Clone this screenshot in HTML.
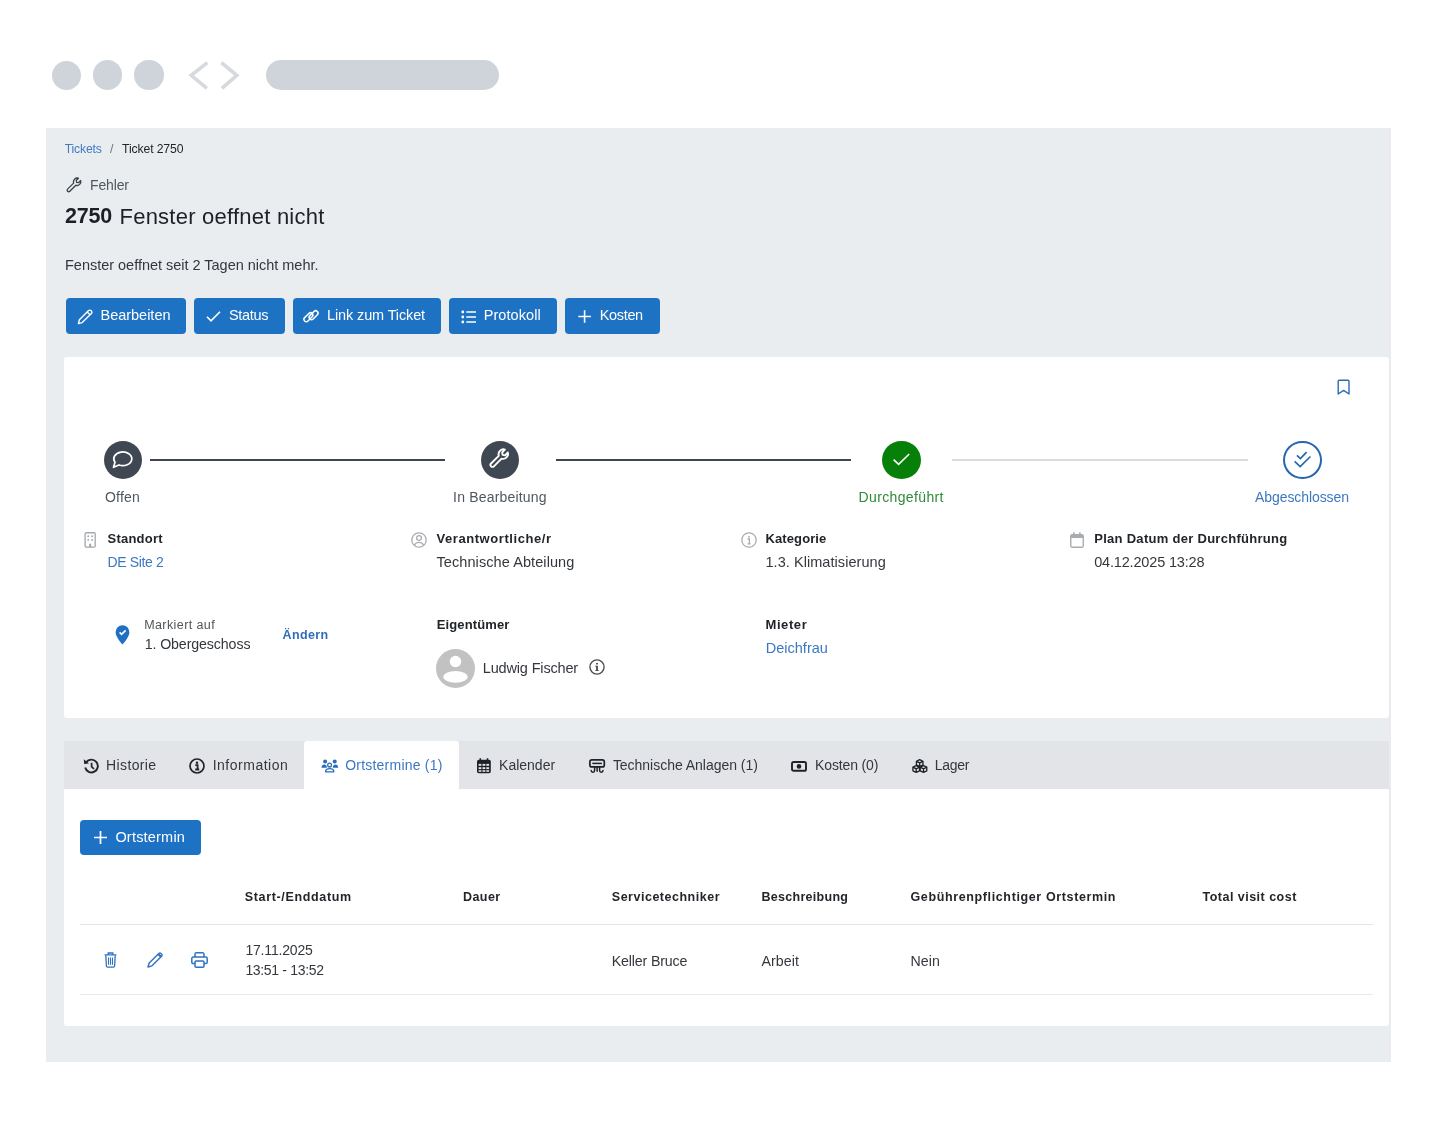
<!DOCTYPE html>
<html><head><meta charset="utf-8">
<style>
html{margin:0;padding:0;background:#fff;}
body{margin:0;padding:0;background:#fff;width:1438px;height:1146px;overflow:hidden;position:relative;font-family:"Liberation Sans",sans-serif;filter:blur(0.4px);}
.a{position:absolute;}
.t{position:absolute;white-space:nowrap;line-height:1;font-family:"Liberation Sans",sans-serif;}
.dot{position:absolute;width:29.3px;height:29.3px;border-radius:50%;background:#cfd4da;top:60.6px;}
.btn{position:absolute;top:298px;height:36px;background:#1e72c4;border-radius:4px;}
.step{position:absolute;top:441px;width:38px;height:38px;border-radius:50%;}
.line{position:absolute;top:459px;height:2px;}
svg{position:absolute;overflow:visible;}
</style></head><body>
<!-- browser chrome -->
<div class="dot" style="left:51.8px;top:61px"></div>
<div class="dot" style="left:92.9px;top:60.4px"></div>
<div class="dot" style="left:134.4px;top:60.3px"></div>
<svg style="left:0;top:0" width="1438" height="120"><path d="M207.4 62.6 L191.2 75.3 L206.9 88.4 M221.4 62.6 L236.8 75.3 L221.9 88.4" fill="none" stroke="#d6d9dd" stroke-width="3.6" stroke-linejoin="miter"/></svg>
<div class="a" style="left:266px;top:60px;width:233px;height:30px;border-radius:15px;background:#cfd4da"></div>
<!-- panel -->
<div class="a" style="left:46px;top:128px;width:1342px;height:934px;background:#eaedf0;border-right:3px solid #eaebee"></div>
<!-- wrench icon (Fehler) -->
<svg style="left:66px;top:177px" width="16" height="16" viewBox="0 0 16 16"><path d="M12.4 1.2a3.9 3.9 0 0 0-4.8 4.9L1.6 12.1a1.5 1.5 0 0 0 2.2 2.2l6-6a3.9 3.9 0 0 0 4.9-4.8l-2.2 2.2-1.9-.3-.3-1.9z" fill="none" stroke="#3b4148" stroke-width="1.3" stroke-linejoin="round"/></svg>
<!-- buttons -->
<div class="btn" style="left:66px;width:120px"></div>
<div class="btn" style="left:194px;width:90.5px"></div>
<div class="btn" style="left:292.5px;width:148.5px"></div>
<div class="btn" style="left:449px;width:108px"></div>
<div class="btn" style="left:565px;width:94.5px"></div>
<!-- button icons -->
<svg style="left:77px;top:308.5px" width="16" height="16" viewBox="0 0 16 16"><path d="M11.6 1.6a1.6 1.6 0 0 1 2.3 0l.5.5a1.6 1.6 0 0 1 0 2.3L5.2 13.6 1.4 14.6l1-3.8z M10.2 3 13 5.8" fill="none" stroke="#fff" stroke-width="1.4" stroke-linejoin="round"/></svg>
<svg style="left:206px;top:310px" width="15" height="13" viewBox="0 0 15 13"><path d="M1 6.8 5 10.8 14 1.8" fill="none" stroke="#fff" stroke-width="1.6"/></svg>
<svg style="left:298px;top:303px" width="28" height="27" viewBox="0 0 28 27"><rect x="-5.3" y="-2.35" width="10.6" height="4.7" rx="2.35" transform="translate(10.4 14.2) rotate(-45)" fill="none" stroke="#fff" stroke-width="1.5"/><rect x="-5.3" y="-2.35" width="10.6" height="4.7" rx="2.35" transform="translate(15.6 12.2) rotate(-45)" fill="none" stroke="#fff" stroke-width="1.5"/></svg>
<svg style="left:460.5px;top:309px" width="16" height="16" viewBox="0 0 16 16"><circle cx="1.8" cy="3" r="1.4" fill="#fff"/><circle cx="1.8" cy="8" r="1.4" fill="#fff"/><circle cx="1.8" cy="13" r="1.4" fill="#fff"/><path d="M5.3 3H15M5.3 8H15M5.3 13H15" stroke="#fff" stroke-width="1.5"/></svg>
<svg style="left:577.5px;top:309.8px" width="14" height="14" viewBox="0 0 14 14"><path d="M6.6 0.3V12.7M0.3 6.5H12.9" stroke="#fff" stroke-width="1.6"/></svg>
<!-- card 1 -->
<div class="a" style="left:64px;top:357px;width:1325px;height:361px;background:#fff;border-radius:3px"></div>
<!-- bookmark -->
<svg style="left:1336.5px;top:378.5px" width="13" height="17" viewBox="0 0 13 17"><path d="M1.2 15V2.3Q1.2 1.2 2.3 1.2H10.9Q12 1.2 12 2.3V15L6.6 11.4Z" fill="none" stroke="#2a6cb5" stroke-width="1.4" stroke-linejoin="round"/></svg>
<!-- step lines -->
<div class="line" style="left:150px;width:295px;background:#3d4650"></div>
<div class="line" style="left:555.5px;width:295px;background:#3d4650"></div>
<div class="line" style="left:952px;width:296px;background:#dadcdf"></div>
<!-- step circles -->
<div class="step" style="left:103.5px;background:#3f4852"></div>
<div class="step" style="left:481px;background:#3f4852"></div>
<div class="step" style="left:882.2px;width:38.7px;height:38.3px;top:440.7px;background:#078009"></div>
<div class="step" style="left:1283px;width:38.7px;height:38.5px;top:440.6px;box-sizing:border-box;border:2px solid #2566b1;background:#fff"></div>
<!-- step icons -->
<svg style="left:112px;top:450px" width="22" height="20" viewBox="0 0 22 20"><path d="M3.0 12.2A9 6.8 0 1 1 7.0 14.96L1.5 17.3Z" fill="none" stroke="#fff" stroke-width="1.7" stroke-linejoin="round"/></svg>
<svg style="left:489.3px;top:448.2px" width="20.5" height="20.5" viewBox="0 0 16 16"><path d="M12.4 1.2a3.9 3.9 0 0 0-4.8 4.9L1.6 12.1a1.5 1.5 0 0 0 2.2 2.2l6-6a3.9 3.9 0 0 0 4.9-4.8l-2.2 2.2-1.9-.3-.3-1.9z" fill="none" stroke="#fff" stroke-width="1.45" stroke-linejoin="round"/></svg>
<svg style="left:893px;top:453px" width="18" height="14" viewBox="0 0 18 14"><path d="M0.6 6.6 5.6 11.4 16.2 1.0" fill="none" stroke="#fff" stroke-width="1.6"/></svg>
<svg style="left:1292px;top:450px" width="20" height="20" viewBox="0 0 20 20"><path d="M4.9 5.3 8.4 8.6 14.6 2.2 M2.6 11.4 8.2 16.6 18.4 6.5" fill="none" stroke="#2566b1" stroke-width="1.7"/></svg>
<!-- info icons row1 -->
<svg style="left:83.5px;top:532px" width="12" height="16" viewBox="0 0 12 16"><rect x="1.1" y="0.75" width="10.1" height="14.3" rx="1.3" fill="none" stroke="#a3a7ab" stroke-width="1.3"/><g fill="#a3a7ab"><circle cx="4.2" cy="4.2" r="0.95"/><circle cx="8.1" cy="4.2" r="0.95"/><circle cx="4.2" cy="7.9" r="0.95"/><circle cx="8.1" cy="7.9" r="0.95"/><path d="M5.1 15V12.3Q6.15 10.9 7.2 12.3V15z"/></g></svg>
<svg style="left:411px;top:532px" width="16" height="16" viewBox="0 0 16 16"><circle cx="8" cy="8" r="7.2" fill="none" stroke="#a9acb0" stroke-width="1.3"/><circle cx="8" cy="6" r="2.4" fill="none" stroke="#a9acb0" stroke-width="1.3"/><path d="M3.5 13.2c.8-1.8 2.5-2.8 4.5-2.8s3.7 1 4.5 2.8" fill="none" stroke="#a9acb0" stroke-width="1.3"/></svg>
<svg style="left:740.5px;top:532px" width="16" height="16" viewBox="0 0 16 16"><circle cx="8" cy="8" r="7.2" fill="none" stroke="#a9acb0" stroke-width="1.3"/><circle cx="8" cy="4.8" r="0.9" fill="#a9acb0"/><path d="M6.6 7H8.4V11.8M6.6 11.8H9.6" fill="none" stroke="#a9acb0" stroke-width="1.3"/></svg>
<svg style="left:1070px;top:532px" width="14" height="16" viewBox="0 0 14 16"><rect x="0.75" y="2.6" width="12.5" height="12.7" rx="1.6" fill="none" stroke="#a9acb0" stroke-width="1.4"/><path d="M0.75 4.2Q0.75 2.6 2.35 2.6H11.65Q13.25 2.6 13.25 4.2V6H0.75z" fill="#a9acb0"/><path d="M3.9 0.3V3M9.9 0.3V3" stroke="#a9acb0" stroke-width="1.5"/></svg>
<!-- pin -->
<svg style="left:114.5px;top:625px" width="15" height="20" viewBox="0 0 15 20"><path d="M7.5 19.5C7.5 19.5 14.4 12.2 14.4 7.2A6.9 6.9 0 0 0 .6 7.2C.6 12.2 7.5 19.5 7.5 19.5z" fill="#1f6fc3"/><path d="M4.6 7.4 6.6 9.4 10.6 5.4" fill="none" stroke="#fff" stroke-width="1.6"/></svg>
<!-- avatar -->
<svg style="left:436px;top:649px" width="39" height="39" viewBox="0 0 39 39"><circle cx="19.5" cy="19.5" r="19.5" fill="#c2c2c2"/><circle cx="19.5" cy="12.5" r="5.7" fill="#fff"/><ellipse cx="19.5" cy="27.8" rx="12.2" ry="5.9" fill="#fff"/></svg>
<svg style="left:588.9px;top:658.8px" width="16" height="16" viewBox="0 0 16 16"><circle cx="8" cy="8" r="7.1" fill="none" stroke="#4a4d51" stroke-width="1.35"/><rect x="7.1" y="3.9" width="1.8" height="1.6" fill="#4a4d51"/><path d="M6.4 6.8H8.9V10.5L10 11.9H6L7.1 10.5V8.1L6.4 7.7z" fill="#4a4d51"/></svg>
<!-- tabs bar -->
<div class="a" style="left:64px;top:741.3px;width:1325px;height:47.7px;background:#e2e4e8"></div>
<div class="a" style="left:304px;top:741.3px;width:154.5px;height:47.7px;background:#fff;border-radius:3px 3px 0 0"></div>
<!-- card 2 -->
<div class="a" style="left:64px;top:789px;width:1325px;height:237px;background:#fff;border-radius:0 0 3px 3px"></div>
<!-- tab icons -->
<svg style="left:83px;top:758px" width="17" height="16" viewBox="0 0 17 16"><path d="M3.2 4.3A6.4 6.4 0 1 1 2.2 9.5" fill="none" stroke="#212529" stroke-width="1.9"/><path d="M0.8 1.2 1.2 6 6 5.6z" fill="#212529"/><path d="M8.6 4.8V8.6L11 11" fill="none" stroke="#212529" stroke-width="1.7"/></svg>
<svg style="left:189px;top:758px" width="16" height="16" viewBox="0 0 16 16"><circle cx="8" cy="8" r="7" fill="none" stroke="#212529" stroke-width="1.7"/><circle cx="8" cy="4.7" r="1.2" fill="#212529"/><path d="M6.3 7.1H8.6V11.5M6.2 11.5H10.2" fill="none" stroke="#212529" stroke-width="1.8"/></svg>
<svg style="left:316px;top:752px" width="28" height="26" viewBox="0 0 28 26"><circle cx="9.1" cy="9.6" r="2" fill="#2a6cb8"/><circle cx="18.7" cy="9.6" r="2" fill="#2a6cb8"/><path d="M5.5 15.7C5.5 13.6 6.8 12.6 8.2 12.6S10.9 13.6 10.9 15.7z M16.8 15.7C16.8 13.6 18.1 12.6 19.5 12.6S22.2 13.6 22.2 15.7z" fill="#2a6cb8"/><circle cx="13.6" cy="13.1" r="1.9" fill="none" stroke="#2a6cb8" stroke-width="1.3"/><path d="M9.6 19.8C9.6 17.7 11.5 16.7 13.7 16.7S17.8 17.7 17.8 19.8z" fill="none" stroke="#2a6cb8" stroke-width="1.3" stroke-linejoin="round"/></svg>
<svg style="left:476.5px;top:758px" width="14" height="16" viewBox="0 0 14 16"><rect x="0" y="1.8" width="13.8" height="13.4" rx="1.8" fill="#1e2226"/><path d="M3.3 0.2V3M10.5 0.2V3" stroke="#1e2226" stroke-width="1.6"/><g fill="#e2e4e8"><rect x="1.6" y="5.9" width="2.8" height="1.9"/><rect x="5.5" y="5.9" width="2.8" height="1.9"/><rect x="9.3" y="5.9" width="2.8" height="1.9"/><rect x="1.6" y="9.2" width="2.8" height="1.9"/><rect x="5.5" y="9.2" width="2.8" height="1.9"/><rect x="9.3" y="9.2" width="2.8" height="1.9"/><rect x="1.6" y="12.2" width="2.8" height="1.6"/><rect x="5.5" y="12.2" width="2.8" height="1.6"/><rect x="9.3" y="12.2" width="2.8" height="1.6"/></g></svg>
<svg style="left:589px;top:758.5px" width="17" height="15" viewBox="0 0 17 15"><rect x="0.9" y="0.9" width="14.4" height="7" rx="2" fill="none" stroke="#1e2226" stroke-width="1.7"/><path d="M3.3 4.4H12.9" stroke="#1e2226" stroke-width="1.5"/><path d="M5.6 8V11.6A1.7 1.7 0 0 1 2.2 11.6 M10.6 8V11.6A1.7 1.7 0 0 0 14 11.6 M8.1 8V12.2" fill="none" stroke="#1e2226" stroke-width="1.5" stroke-linecap="round"/></svg>
<svg style="left:791px;top:760.5px" width="17" height="11" viewBox="0 0 17 11"><rect x="1" y="1" width="14" height="8.8" rx="1.6" fill="none" stroke="#1e2226" stroke-width="1.9"/><circle cx="8" cy="5.4" r="2.3" fill="#1e2226"/></svg>
<svg style="left:911.5px;top:758.8px" width="16" height="14" viewBox="0 0 16 14"><g fill="none" stroke="#1e2226" stroke-width="1.3" stroke-linejoin="round"><path d="M7.7 0.7 11 2.3V5.9L7.7 7.5 4.4 5.9V2.3z M4.4 2.3 7.7 3.9 11 2.3 M7.7 3.9V7.5"/><path d="M4.2 6.6 7.5 8.2V11.8L4.2 13.4 0.9 11.8V8.2z M0.9 8.2 4.2 9.8 7.5 8.2 M4.2 9.8V13.4"/><path d="M11.5 6.6 14.8 8.2V11.8L11.5 13.4 8.2 11.8V8.2z M8.2 8.2 11.5 9.8 14.8 8.2 M11.5 9.8V13.4"/></g></svg>
<!-- Ortstermin button -->
<div class="a" style="left:80px;top:820px;width:121px;height:35px;background:#1e72c4;border-radius:4px"></div>
<svg style="left:93.5px;top:831px" width="13" height="13" viewBox="0 0 13 13"><path d="M6.5 0V13M0 6.5H13" stroke="#fff" stroke-width="1.7"/></svg>
<!-- table lines -->
<div class="a" style="left:80px;top:923.5px;width:1293px;height:1px;background:#e3e5e8"></div>
<div class="a" style="left:80px;top:993.5px;width:1293px;height:1px;background:#e8eaed"></div>
<!-- row icons -->
<svg style="left:104px;top:952px" width="13" height="16" viewBox="0 0 13 16"><path d="M4.2 2.2V1h4.6v1.2 M0.6 2.8H12.4" fill="none" stroke="#2f72c2" stroke-width="1.3"/><path d="M1.8 3.2 2.4 14a1.2 1.2 0 0 0 1.2 1.1h5.8A1.2 1.2 0 0 0 10.6 14L11.2 3.2" fill="none" stroke="#2f72c2" stroke-width="1.3"/><path d="M4.5 5.5V12.8M6.5 5.5V12.8M8.5 5.5V12.8" stroke="#2f72c2" stroke-width="1.1"/></svg>
<svg style="left:147px;top:951.5px" width="16" height="16" viewBox="0 0 16 16"><path d="M11.8 1.4a1.5 1.5 0 0 1 2.2 0l.6.6a1.5 1.5 0 0 1 0 2.2L5 13.8 1 15l1.2-4z" fill="none" stroke="#2f72c2" stroke-width="1.4" stroke-linejoin="round"/><path d="M11.2 2 14 4.8" stroke="#2f72c2" stroke-width="2.2"/></svg>
<svg style="left:190.5px;top:952px" width="17" height="16" viewBox="0 0 17 16"><path d="M4 5V2.2A1.4 1.4 0 0 1 5.4.8h6.2A1.4 1.4 0 0 1 13 2.2V5 M4 11.6H2.2A1.4 1.4 0 0 1 .8 10.2V6.4A1.4 1.4 0 0 1 2.2 5h12.6a1.4 1.4 0 0 1 1.4 1.4v3.8a1.4 1.4 0 0 1-1.4 1.4H13" fill="none" stroke="#2f72c2" stroke-width="1.5"/><rect x="4" y="9" width="9" height="6.2" rx="1.2" fill="none" stroke="#2f72c2" stroke-width="1.5"/></svg>
<div class=t style="left:64.7px;top:143.27px;font-size:12.2px;font-weight:400;color:#3f7bc4;letter-spacing:-0.159px;">Tickets</div>
<div class=t style="left:110.0px;top:143.02px;font-size:12.5px;font-weight:400;color:#6c757d;letter-spacing:1.516px;">/</div>
<div class=t style="left:122.0px;top:143.27px;font-size:12.2px;font-weight:400;color:#212529;letter-spacing:-0.106px;">Ticket 2750</div>
<div class=t style="left:90.0px;top:177.95px;font-size:14px;font-weight:400;color:#50575e;letter-spacing:-0.138px;">Fehler</div>
<div class=t style="left:65.0px;top:206.00px;font-size:21.5px;font-weight:700;color:#1d2125;letter-spacing:-0.248px;">2750</div>
<div class=t style="left:119.5px;top:205.58px;font-size:22px;font-weight:400;color:#1d2125;letter-spacing:0.231px;">Fenster oeffnet nicht</div>
<div class=t style="left:65.0px;top:257.73px;font-size:14.5px;font-weight:400;color:#33383d;letter-spacing:-0.018px;">Fenster oeffnet seit 2 Tagen nicht mehr.</div>
<div class=t style="left:100.5px;top:308.23px;font-size:14.5px;font-weight:400;color:#ffffff;letter-spacing:-0.016px;">Bearbeiten</div>
<div class=t style="left:228.9px;top:308.23px;font-size:14.5px;font-weight:400;color:#ffffff;letter-spacing:-0.302px;">Status</div>
<div class=t style="left:327.1px;top:308.23px;font-size:14.5px;font-weight:400;color:#ffffff;letter-spacing:-0.137px;">Link zum Ticket</div>
<div class=t style="left:483.7px;top:308.23px;font-size:14.5px;font-weight:400;color:#ffffff;letter-spacing:0.072px;">Protokoll</div>
<div class=t style="left:599.8px;top:308.23px;font-size:14.5px;font-weight:400;color:#ffffff;letter-spacing:-0.351px;">Kosten</div>
<div class=t style="left:104.9px;top:489.75px;font-size:14px;font-weight:400;color:#4f5861;letter-spacing:0.250px;">Offen</div>
<div class=t style="left:453.1px;top:489.75px;font-size:14px;font-weight:400;color:#4f5861;letter-spacing:0.179px;">In Bearbeitung</div>
<div class=t style="left:858.5px;top:489.75px;font-size:14px;font-weight:400;color:#2f8a3a;letter-spacing:0.369px;">Durchgeführt</div>
<div class=t style="left:1255.0px;top:489.75px;font-size:14px;font-weight:400;color:#3c78c2;letter-spacing:-0.079px;">Abgeschlossen</div>
<div class=t style="left:107.5px;top:532.40px;font-size:13px;font-weight:700;color:#212529;letter-spacing:0.221px;">Standort</div>
<div class=t style="left:107.5px;top:555.45px;font-size:14px;font-weight:400;color:#3c78c2;letter-spacing:-0.343px;">DE Site 2</div>
<div class=t style="left:436.5px;top:532.40px;font-size:13px;font-weight:700;color:#212529;letter-spacing:0.563px;">Verantwortliche/r</div>
<div class=t style="left:436.5px;top:555.03px;font-size:14.5px;font-weight:400;color:#34383d;letter-spacing:0.082px;">Technische Abteilung</div>
<div class=t style="left:765.5px;top:532.40px;font-size:13px;font-weight:700;color:#212529;letter-spacing:0.104px;">Kategorie</div>
<div class=t style="left:765.5px;top:555.03px;font-size:14.5px;font-weight:400;color:#34383d;letter-spacing:0.051px;">1.3. Klimatisierung</div>
<div class=t style="left:1094.2px;top:532.40px;font-size:13px;font-weight:700;color:#212529;letter-spacing:0.287px;">Plan Datum der Durchführung</div>
<div class=t style="left:1094.2px;top:555.03px;font-size:14.5px;font-weight:400;color:#34383d;letter-spacing:-0.173px;">04.12.2025 13:28</div>
<div class=t style="left:144.2px;top:619.22px;font-size:12.5px;font-weight:400;color:#4f555b;letter-spacing:0.409px;">Markiert auf</div>
<div class=t style="left:144.7px;top:636.98px;font-size:14.2px;font-weight:400;color:#34383d;letter-spacing:-0.105px;">1. Obergeschoss</div>
<div class=t style="left:282.5px;top:628.82px;font-size:12.5px;font-weight:700;color:#2f6fba;letter-spacing:0.390px;">Ändern</div>
<div class=t style="left:436.7px;top:617.90px;font-size:13px;font-weight:700;color:#212529;letter-spacing:0.132px;">Eigentümer</div>
<div class=t style="left:482.8px;top:660.53px;font-size:14.5px;font-weight:400;color:#34383d;letter-spacing:-0.163px;">Ludwig Fischer</div>
<div class=t style="left:765.5px;top:618.00px;font-size:13px;font-weight:700;color:#212529;letter-spacing:0.581px;">Mieter</div>
<div class=t style="left:765.7px;top:640.73px;font-size:14.5px;font-weight:400;color:#3c78c2;letter-spacing:0.017px;">Deichfrau</div>
<div class=t style="left:106.1px;top:757.95px;font-size:14px;font-weight:400;color:#33383d;letter-spacing:0.362px;">Historie</div>
<div class=t style="left:212.7px;top:757.95px;font-size:14px;font-weight:400;color:#33383d;letter-spacing:0.505px;">Information</div>
<div class=t style="left:345.2px;top:757.95px;font-size:14px;font-weight:400;color:#3c78c2;letter-spacing:0.220px;">Ortstermine (1)</div>
<div class=t style="left:499.1px;top:757.95px;font-size:14px;font-weight:400;color:#33383d;letter-spacing:-0.007px;">Kalender</div>
<div class=t style="left:612.9px;top:757.95px;font-size:14px;font-weight:400;color:#33383d;letter-spacing:-0.026px;">Technische Anlagen (1)</div>
<div class=t style="left:815.1px;top:757.95px;font-size:14px;font-weight:400;color:#33383d;letter-spacing:-0.144px;">Kosten (0)</div>
<div class=t style="left:934.8px;top:757.95px;font-size:14px;font-weight:400;color:#33383d;letter-spacing:-0.278px;">Lager</div>
<div class=t style="left:115.4px;top:830.03px;font-size:14.5px;font-weight:400;color:#ffffff;letter-spacing:0.203px;">Ortstermin</div>
<div class=t style="left:244.8px;top:891.22px;font-size:12.5px;font-weight:700;color:#22262a;letter-spacing:0.655px;">Start-/Enddatum</div>
<div class=t style="left:463.1px;top:891.22px;font-size:12.5px;font-weight:700;color:#22262a;letter-spacing:0.391px;">Dauer</div>
<div class=t style="left:611.8px;top:891.22px;font-size:12.5px;font-weight:700;color:#22262a;letter-spacing:0.509px;">Servicetechniker</div>
<div class=t style="left:761.5px;top:891.22px;font-size:12.5px;font-weight:700;color:#22262a;letter-spacing:0.286px;">Beschreibung</div>
<div class=t style="left:910.5px;top:891.22px;font-size:12.5px;font-weight:700;color:#22262a;letter-spacing:0.626px;">Gebührenpflichtiger Ortstermin</div>
<div class=t style="left:1202.5px;top:891.22px;font-size:12.5px;font-weight:700;color:#22262a;letter-spacing:0.480px;">Total visit cost</div>
<div class=t style="left:245.4px;top:942.85px;font-size:14px;font-weight:400;color:#34383d;letter-spacing:-0.181px;">17.11.2025</div>
<div class=t style="left:245.4px;top:962.65px;font-size:14px;font-weight:400;color:#34383d;letter-spacing:-0.326px;">13:51 - 13:52</div>
<div class=t style="left:611.8px;top:953.68px;font-size:14.2px;font-weight:400;color:#34383d;letter-spacing:-0.153px;">Keller Bruce</div>
<div class=t style="left:761.5px;top:953.68px;font-size:14.2px;font-weight:400;color:#34383d;letter-spacing:0.087px;">Arbeit</div>
<div class=t style="left:910.5px;top:953.68px;font-size:14.2px;font-weight:400;color:#34383d;letter-spacing:0.071px;">Nein</div>
</body></html>
